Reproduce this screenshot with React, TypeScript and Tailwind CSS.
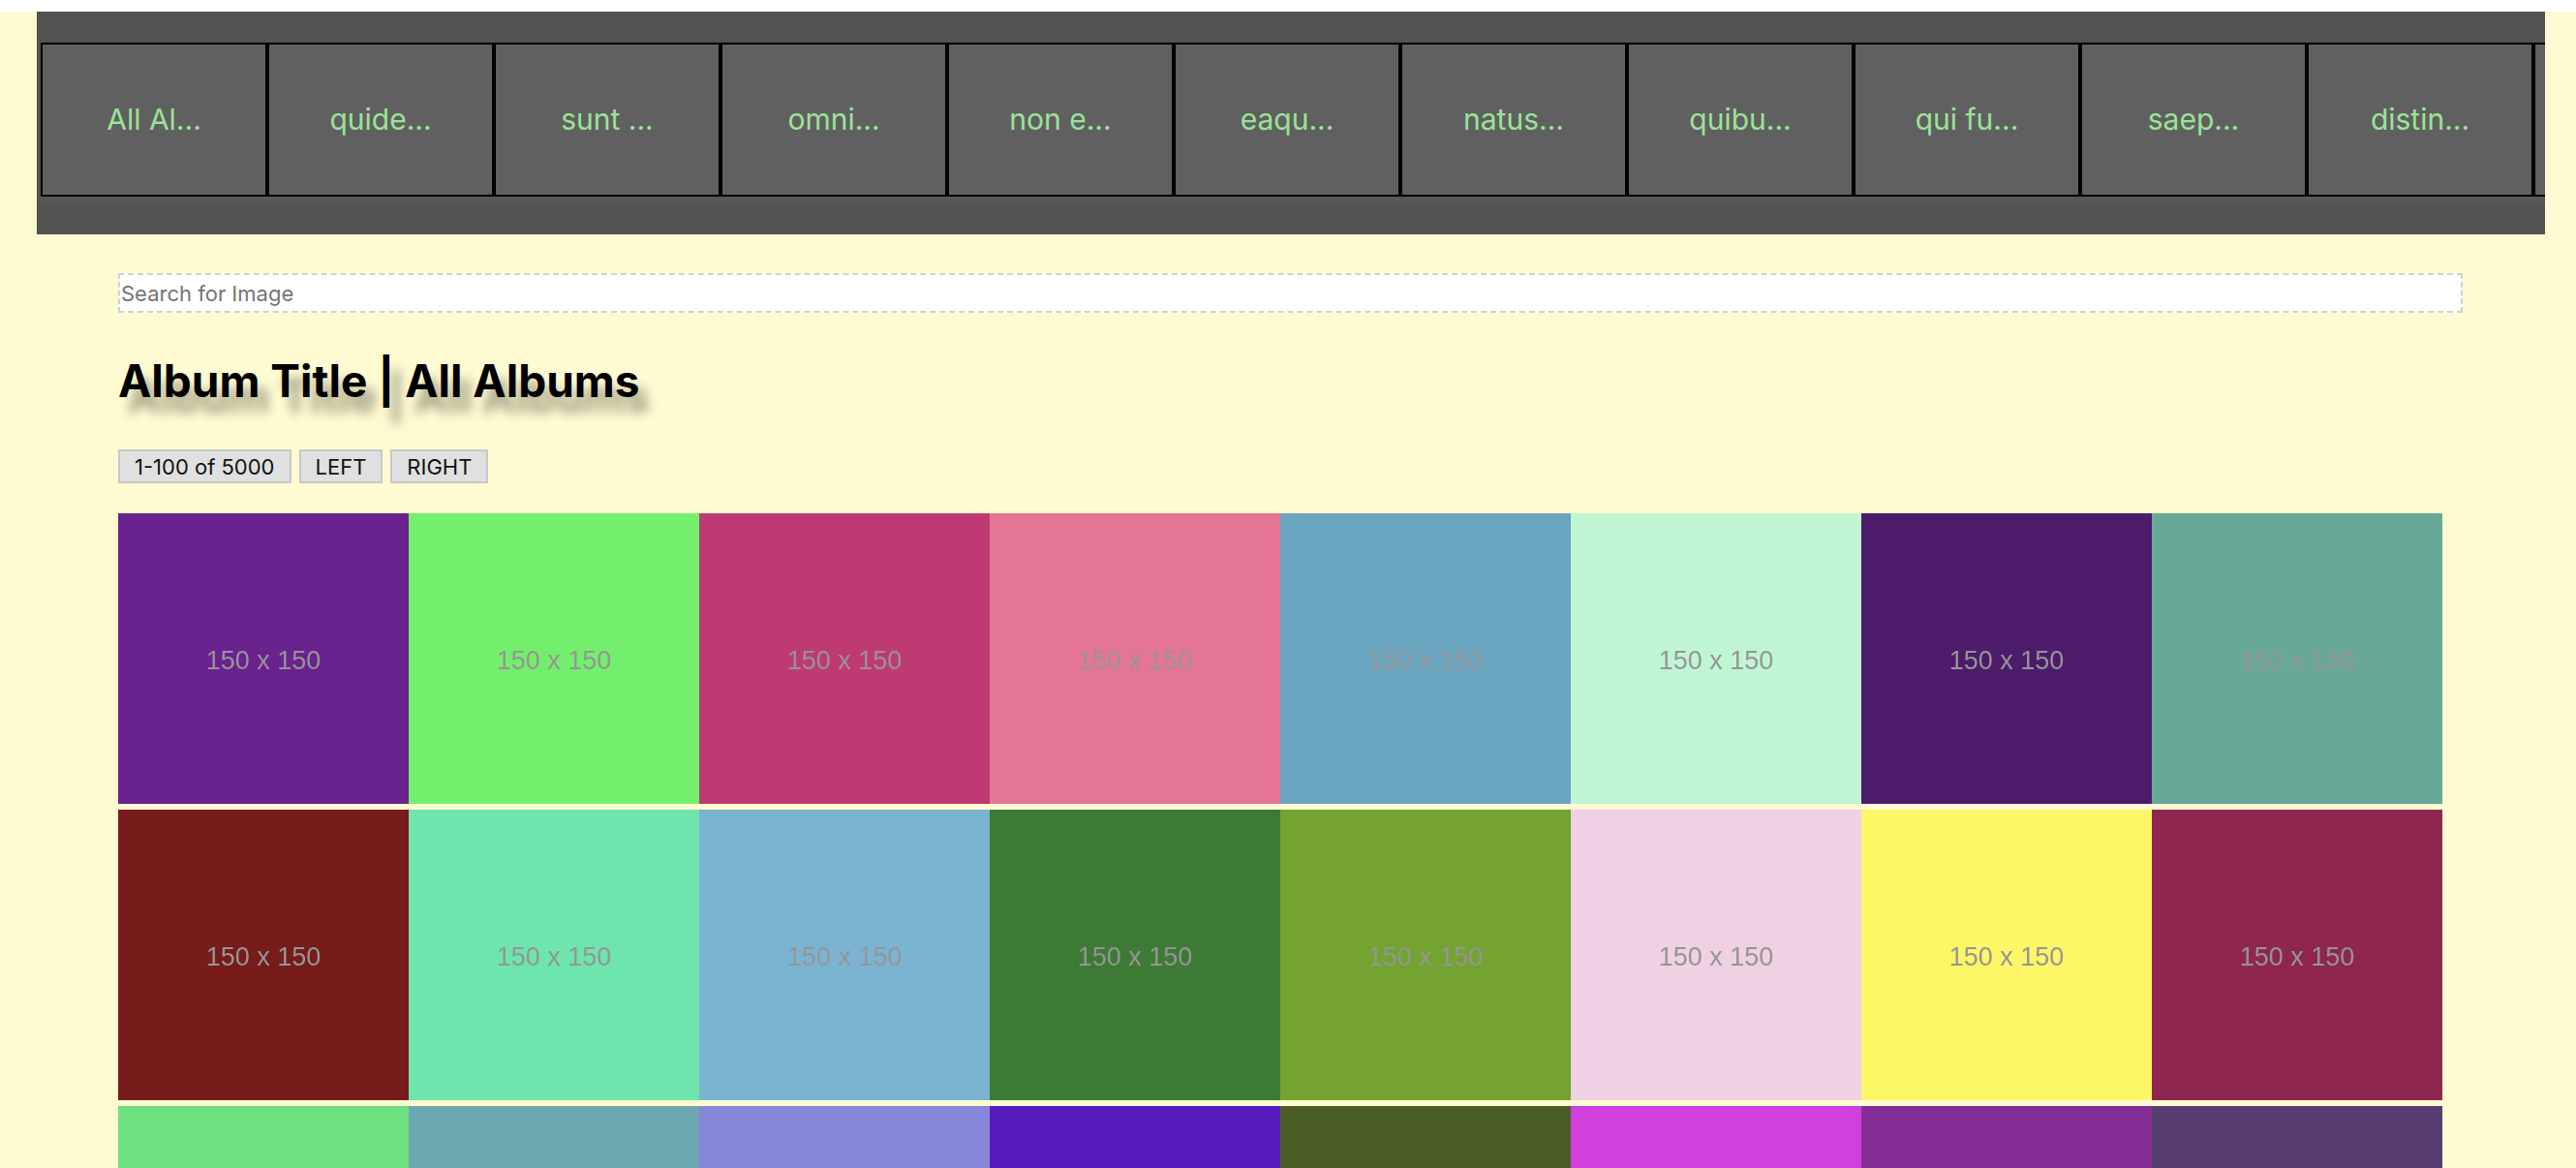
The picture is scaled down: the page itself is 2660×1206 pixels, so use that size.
const albums = [
  "All Al...",
  "quide...",
  "sunt ...",
  "omni...",
  "non e...",
  "eaqu...",
  "natus...",
  "quibu...",
  "qui fu...",
  "saep...",
  "distin...",
  "labor...",
];

const colors = [
  "#6a228f", "#74ef6d", "#bf3a73", "#e57595", "#6aa5c0", "#c0f5d3", "#4c1c6a", "#68a898",
  "#771b1b", "#6de5ad", "#7ab4d0", "#3d7a35", "#73a431", "#f0d0e3", "#fdf667", "#8f2650",
  "#6de07f", "#6ca8b1", "#8886d8", "#561cbd", "#4b5d26", "#d23fdf", "#842d94", "#5a3d70",
];

function AlbumNav() {
  return (
    <nav className="ml-[38px] mr-[32px] mt-[12px] h-[230px] bg-[#525252] pt-[32px] pl-[4px]">
      <div className="bg-[#585858] h-[166px] overflow-hidden">
        <div className="flex">
          {albums.map((name) => (
            <div
              key={name}
              className="shrink-0 w-[234px] h-[159px] border-2 border-black bg-[#606060] flex items-center justify-center text-[30px] text-[#9be397]"
            >
              {name}
            </div>
          ))}
        </div>
      </div>
    </nav>
  );
}

export default function App() {
  return (
    <div className="min-h-screen bg-[#fefad2] pb-10 font-['Inter',sans-serif]">
      <AlbumNav />
      <main className="ml-[122px] w-[2421px] pt-[40px]">
        <input
          type="text"
          placeholder="Search for Image"
          className="block w-full h-[41px] bg-white border-2 border-dashed border-[#d2d2d2] px-[1px] text-[22px] placeholder:text-[#757575] outline-none"
        />
        <h1 className="mt-[47px] text-[46px] leading-none font-bold text-black font-['Inter',sans-serif] [text-shadow:10px_16px_12px_rgba(0,0,0,0.4)]">
          Album Title | All Albums
        </h1>
        <div className="mt-[48px] flex gap-[8px]">
          <button className="h-[35px] px-[15px] bg-[#e0e0e0] border-2 border-[#c8c8c8] text-[22px] text-[#111]">
            1-100 of 5000
          </button>
          <button className="h-[35px] px-[15px] bg-[#e0e0e0] border-2 border-[#c8c8c8] text-[22px] text-[#111]">
            LEFT
          </button>
          <button className="h-[35px] px-[15px] bg-[#e0e0e0] border-2 border-[#c8c8c8] text-[22px] text-[#111]">
            RIGHT
          </button>
        </div>
        <div className="mt-[31px] grid grid-cols-8 w-[2400px] gap-y-[6px]">
          {colors.map((c, i) => (
            <div
              key={i}
              className="h-[300px] flex items-center justify-center pt-[4px]"
              style={{ backgroundColor: c }}
            >
              <span className="text-[27px] text-[#959595] font-['Liberation_Sans',sans-serif] blur-[0.4px]">
                150 x 150
              </span>
            </div>
          ))}
        </div>
      </main>
    </div>
  );
}
